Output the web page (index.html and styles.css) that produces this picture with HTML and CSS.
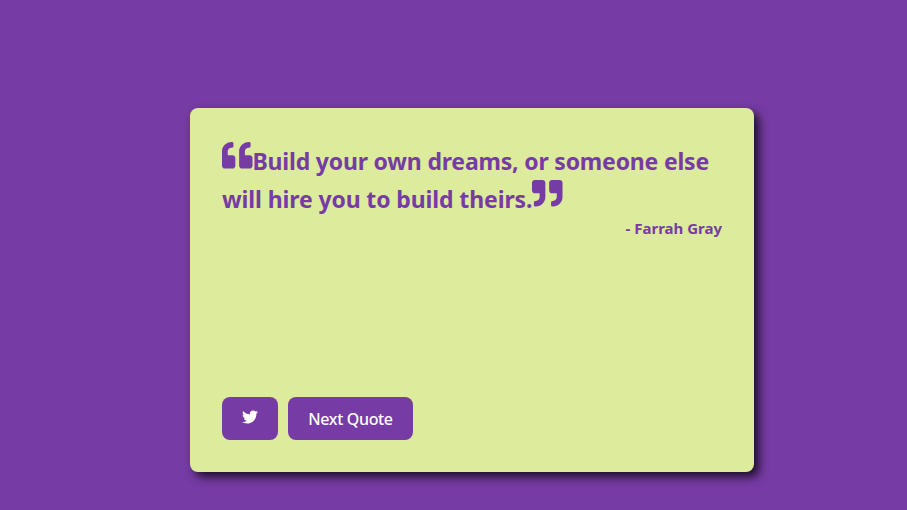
FILE: index.html
```html
<!DOCTYPE html>
<html lang="en">
<head>
<meta charset="utf-8">
<title>Random Quote</title>
<link rel="stylesheet" href="styles.css">
</head>
<body>
<main class="quote-box">
  <section class="quote">
    <p class="quote-text"><svg class="mark" viewBox="0 0 512 512" aria-hidden="true"><path d="M464 256h-80v-64c0-35.300 28.700-64 64-64h8c13.300 0 24-10.700 24-24V56c0-13.300-10.700-24-24-24h-8c-88.400 0-160 71.600-160 160v240c0 26.500 21.500 48 48 48h128c26.500 0 48-21.500 48-48V304c0-26.500-21.500-48-48-48zm-288 0H96v-64c0-35.300 28.700-64 64-64h8c13.300 0 24-10.700 24-24V56c0-13.300-10.700-24-24-24h-8C71.600 32 0 103.600 0 192v240c0 26.500 21.500 48 48 48h128c26.500 0 48-21.500 48-48V304c0-26.500-21.500-48-48-48z"/></svg><span class="line first">Build your own dreams, or someone else</span><br><span class="line second">will hire you to build theirs.</span><svg class="mark" viewBox="0 0 512 512" aria-hidden="true"><path d="M464 32H336c-26.500 0-48 21.500-48 48v128c0 26.500 21.500 48 48 48h80v64c0 35.300-28.700 64-64 64h-8c-13.300 0-24 10.700-24 24v48c0 13.300 10.700 24 24 24h8c88.400 0 160-71.600 160-160V80c0-26.500-21.500-48-48-48zm-288 0H48C21.500 32 0 53.500 0 80v128c0 26.500 21.500 48 48 48h80v64c0 35.300-28.700 64-64 64h-8c-13.300 0-24 10.700-24 24v48c0 13.300 10.700 24 24 24h8c88.400 0 160-71.600 160-160V80c0-26.500-21.500-48-48-48z"/></svg></p>
    <p class="author">- Farrah Gray</p>
  </section>
  <div class="actions">
    <a class="button tweet" aria-label="Tweet"><svg class="bird" viewBox="0 0 512 512" aria-hidden="true"><path d="M459.370 151.716c.325 4.548.325 9.097.325 13.645 0 138.720-105.583 298.558-298.558 298.558-59.452 0-114.680-17.219-161.137-47.106 8.447.974 16.568 1.299 25.340 1.299 49.055 0 94.213-16.568 130.274-44.832-46.132-.975-84.792-31.188-98.112-72.772 6.498.974 12.995 1.624 19.818 1.624 9.421 0 18.843-1.300 27.614-3.573-48.081-9.747-84.143-51.980-84.143-102.985v-1.299c13.969 7.797 30.214 12.670 47.431 13.319-28.264-18.843-46.781-51.005-46.781-87.391 0-19.492 5.197-37.360 14.294-52.954 51.655 63.675 129.300 105.258 216.365 109.807-1.624-7.797-2.599-15.918-2.599-24.040 0-57.828 46.782-104.934 104.934-104.934 30.213 0 57.502 12.670 76.670 33.137 23.715-4.548 46.456-13.320 66.599-25.340-7.798 24.366-24.366 44.833-46.132 57.827 21.117-2.273 41.584-8.122 60.426-16.243-14.292 20.791-32.161 39.308-52.628 54.253z"/></svg></a>
    <button class="button next">Next Quote</button>
  </div>
</main>
</body>
</html>
```
FILE: styles.css
```css
* { box-sizing: border-box; }
body {
  margin: 0;
  min-height: 510px;
  background: #763ba4;
  color: #763ba4;
  font-family: "Noto Sans", "Open Sans", sans-serif;
  overflow: hidden;
}
.quote-box {
  display: flex;
  flex-direction: column;
  justify-content: space-between;
  width: 564px;
  height: 364px;
  margin: 108px 0 0 190px;
  padding: 32px;
  border-radius: 8px;
  background: #ddeb9d;
  box-shadow: 5px 5px 10px rgba(0, 0, 0, 0.75);
}
.quote-text {
  margin: 0;
  padding-top: 2px;
  font-size: 23px;
  line-height: 38px;
  font-weight: 700;
  white-space: nowrap;
}
.first { letter-spacing: -0.19px; }
.second { letter-spacing: -0.12px; }
.mark {
  width: 30.500px;
  height: 30.500px;
  margin-top: -5px;
  vertical-align: 0;
  fill: currentColor;
}
.author {
  margin: -2px 0 0;
  font-size: 15px;
  line-height: 24px;
  font-weight: 700;
  text-align: right;
}
.actions { display: flex; gap: 10px; }
.button {
  display: flex;
  align-items: center;
  justify-content: center;
  height: 43px;
  padding: 0;
  border: 0;
  border-radius: 8px;
  background: #763ba4;
  color: #fff;
  font: 500 16px "Noto Sans", "Open Sans", sans-serif;
  letter-spacing: -0.350px;
}
.tweet { width: 56px; padding-bottom: 4px; }
.next { width: 125px; padding-top: 1px; }
.bird { width: 16px; height: 16px; fill: currentColor; }
```
